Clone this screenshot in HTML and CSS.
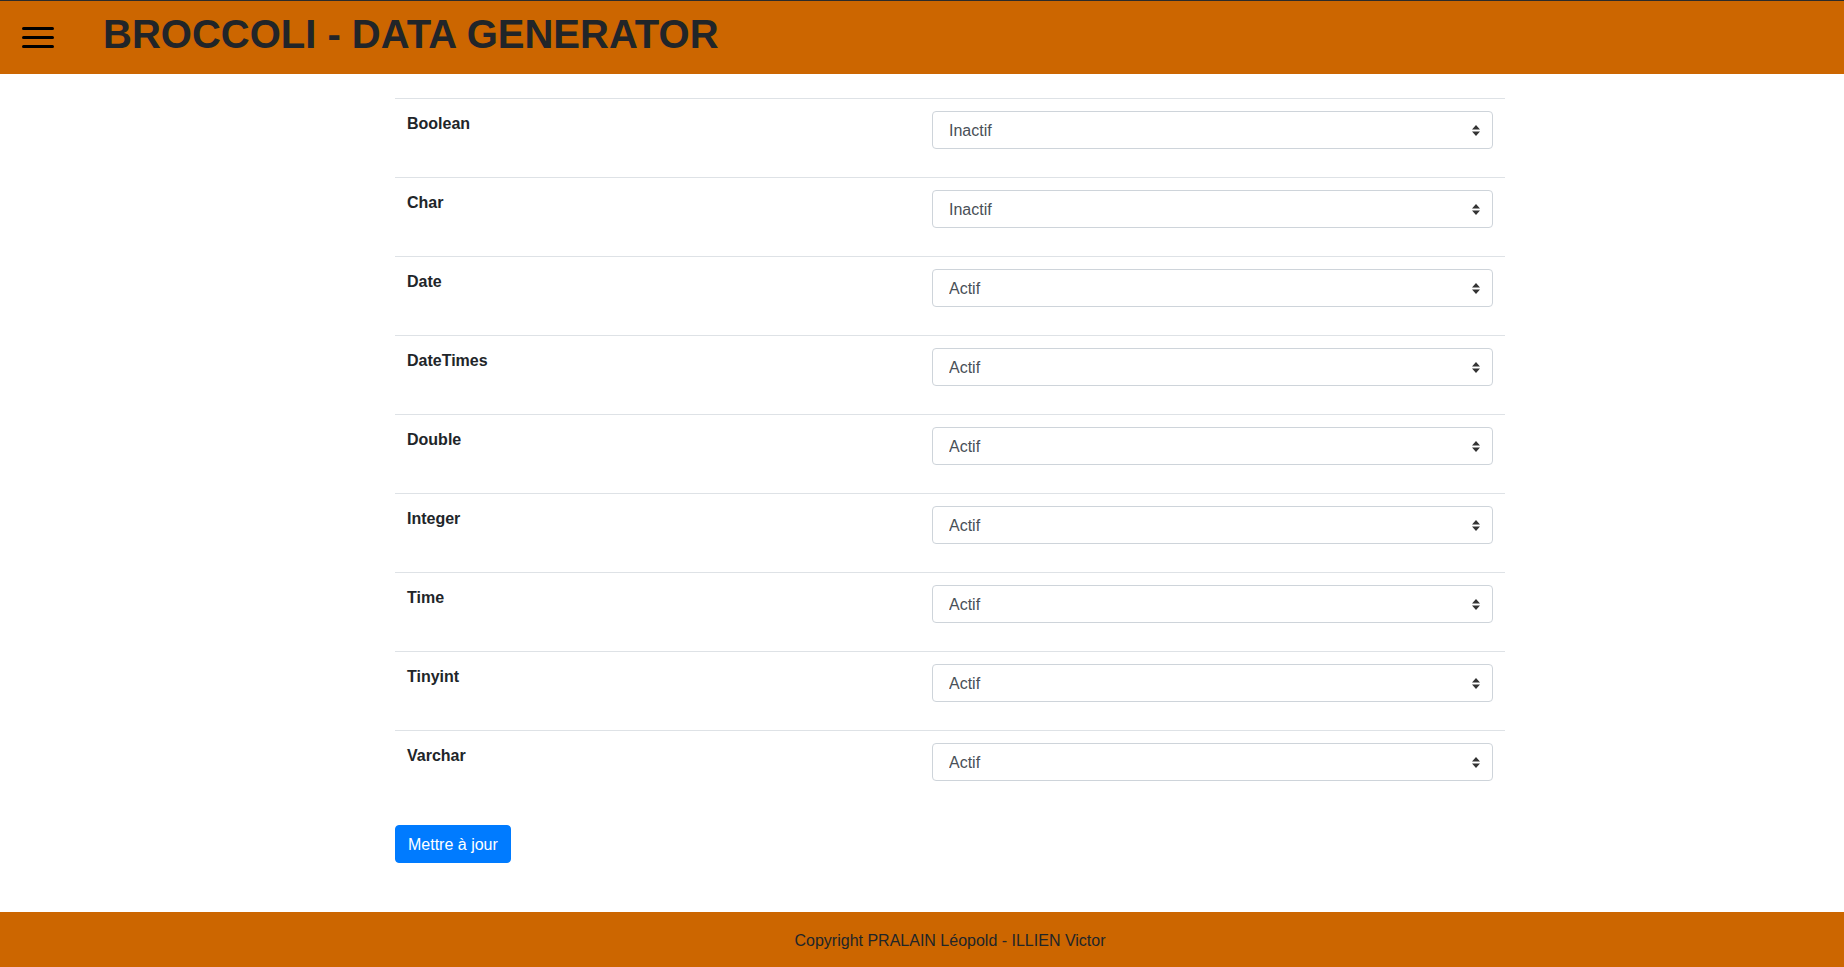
FILE: index.html
```html
<!DOCTYPE html>
<html lang="fr">
<head>
<meta charset="utf-8">
<title>Broccoli - Data Generator</title>
<link rel="stylesheet" href="styles.css">
</head>
<body>
<header class="topbar">
  <svg class="burger" width="32" height="24" viewBox="0 0 32 24" aria-hidden="true">
    <g stroke="#000" stroke-width="3" stroke-linecap="round">
      <line x1="1.5" y1="2.5" x2="30.5" y2="2.5"/>
      <line x1="1.5" y1="11.5" x2="30.5" y2="11.5"/>
      <line x1="1.5" y1="20.5" x2="30.5" y2="20.5"/>
    </g>
  </svg>
  <h1 class="title">BROCCOLI - DATA GENERATOR</h1>
</header>

<main class="main">
  <div class="container">
    <form>
      <table class="types">
        <colgroup><col class="col-label"><col></colgroup>
        <tbody>
          <tr><th>Boolean</th><td><div class="form-group"><select class="form-control"><option>Inactif</option><option>Actif</option></select><svg class="arrow" width="8" height="11" viewBox="0 0 8 11"><path d="M0 4.5L4 0L8 4.5Z M0 6.5L8 6.5L4 11Z" fill="#333"/></svg></div></td></tr>
          <tr><th>Char</th><td><div class="form-group"><select class="form-control"><option>Inactif</option><option>Actif</option></select><svg class="arrow" width="8" height="11" viewBox="0 0 8 11"><path d="M0 4.5L4 0L8 4.5Z M0 6.5L8 6.5L4 11Z" fill="#333"/></svg></div></td></tr>
          <tr><th>Date</th><td><div class="form-group"><select class="form-control"><option>Actif</option><option>Inactif</option></select><svg class="arrow" width="8" height="11" viewBox="0 0 8 11"><path d="M0 4.5L4 0L8 4.5Z M0 6.5L8 6.5L4 11Z" fill="#333"/></svg></div></td></tr>
          <tr><th>DateTimes</th><td><div class="form-group"><select class="form-control"><option>Actif</option><option>Inactif</option></select><svg class="arrow" width="8" height="11" viewBox="0 0 8 11"><path d="M0 4.5L4 0L8 4.5Z M0 6.5L8 6.5L4 11Z" fill="#333"/></svg></div></td></tr>
          <tr><th>Double</th><td><div class="form-group"><select class="form-control"><option>Actif</option><option>Inactif</option></select><svg class="arrow" width="8" height="11" viewBox="0 0 8 11"><path d="M0 4.5L4 0L8 4.5Z M0 6.5L8 6.5L4 11Z" fill="#333"/></svg></div></td></tr>
          <tr><th>Integer</th><td><div class="form-group"><select class="form-control"><option>Actif</option><option>Inactif</option></select><svg class="arrow" width="8" height="11" viewBox="0 0 8 11"><path d="M0 4.5L4 0L8 4.5Z M0 6.5L8 6.5L4 11Z" fill="#333"/></svg></div></td></tr>
          <tr><th>Time</th><td><div class="form-group"><select class="form-control"><option>Actif</option><option>Inactif</option></select><svg class="arrow" width="8" height="11" viewBox="0 0 8 11"><path d="M0 4.5L4 0L8 4.5Z M0 6.5L8 6.5L4 11Z" fill="#333"/></svg></div></td></tr>
          <tr><th>Tinyint</th><td><div class="form-group"><select class="form-control"><option>Actif</option><option>Inactif</option></select><svg class="arrow" width="8" height="11" viewBox="0 0 8 11"><path d="M0 4.5L4 0L8 4.5Z M0 6.5L8 6.5L4 11Z" fill="#333"/></svg></div></td></tr>
          <tr><th>Varchar</th><td><div class="form-group"><select class="form-control"><option>Actif</option><option>Inactif</option></select><svg class="arrow" width="8" height="11" viewBox="0 0 8 11"><path d="M0 4.5L4 0L8 4.5Z M0 6.5L8 6.5L4 11Z" fill="#333"/></svg></div></td></tr>
        </tbody>
      </table>
      <button type="submit" class="btn">Mettre à jour</button>
    </form>
  </div>
</main>

<footer class="footer">Copyright PRALAIN Léopold - ILLIEN Victor</footer>
</body>
</html>
```

FILE: styles.css
```css
* { box-sizing: border-box; }

html, body {
  margin: 0;
  padding: 0;
}

body {
  font-family: "Liberation Sans", Arial, sans-serif;
  font-size: 16px;
  line-height: 1.5;
  color: #212529;
  background: #fff;
}

.topbar {
  display: flex;
  align-items: flex-start;
  height: 74px;
  background: #cc6600;
  border-top: 1px solid #2b2b2b;
  padding-left: 22px;
}

.burger {
  display: block;
  margin-top: 25px;
  flex: none;
}

.title {
  margin: 9px 0 0 49px;
  font-size: 40px;
  line-height: 48px;
  font-weight: 700;
  color: #212529;
}

.main {
  padding: 24px 0 49px 56px;
}

.container {
  width: 1140px;
  margin: 0 auto;
  padding: 0 15px;
}

.types {
  width: 100%;
  border-collapse: collapse;
  table-layout: fixed;
  margin-bottom: 16px;
}

.col-label { width: 525px; }

.types th,
.types td {
  padding: 12px;
  border-top: 1px solid #dee2e6;
  vertical-align: top;
  text-align: left;
}

.types th {
  font-weight: 700;
  padding-top: 13px;
  padding-bottom: 11px;
}

.form-group {
  position: relative;
  margin-bottom: 16px;
}

.form-control {
  display: block;
  width: 100%;
  height: 38px;
  padding: 7px 28px 5px 16px;
  font-family: "Liberation Sans", Arial, sans-serif;
  font-size: 16px;
  line-height: 24px;
  color: #495057;
  background: #fff;
  border: 1px solid #ced4da;
  border-radius: 4px;
  -webkit-appearance: none;
  appearance: none;
  margin: 0;
}

.arrow {
  position: absolute;
  right: 13px;
  top: 14px;
  pointer-events: none;
}

.btn {
  display: inline-block;
  height: 38px;
  padding: 7px 12px 5px;
  font-family: "Liberation Sans", Arial, sans-serif;
  font-size: 16px;
  line-height: 24px;
  color: #fff;
  background: #007bff;
  border: 1px solid #007bff;
  border-radius: 4px;
  cursor: pointer;
  vertical-align: top;
}

.footer {
  background: #cc6600;
  padding: 17px 0 15px 56px;
  text-align: center;
  color: #212529;
}
```
